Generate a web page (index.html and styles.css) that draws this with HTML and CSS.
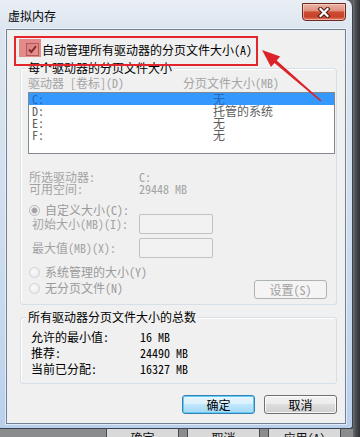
FILE: index.html
```html
<!DOCTYPE html>
<html lang="zh-CN">
<head>
<meta charset="utf-8">
<title>虚拟内存</title>
<link rel="stylesheet" href="styles.css">
</head>
<body>
<div class="screen">
  <div class="window">
    <div class="titlebar">
      <span class="title">虚拟内存</span>
      <div class="close">
        <svg width="14" height="11" viewBox="0 0 14 11"><path d="M3.5 2 L10.5 9 M10.5 2 L3.5 9" stroke="#4a1a14" stroke-width="4.2" stroke-linecap="square"/><path d="M3.5 2 L10.5 9 M10.5 2 L3.5 9" stroke="#fff" stroke-width="2.2" stroke-linecap="square"/></svg>
      </div>
    </div>
    <div class="client">
      <div class="auto-row">
        <span class="checkbox"><svg width="11" height="11" viewBox="0 0 11 11"><path d="M2 5.5 L4.3 8 L9 2.2" fill="none" stroke="#2a2a2a" stroke-width="1.9"/></svg></span>
        <span>自动管理所有驱动器的分页文件大小(A)</span>
      </div>

      <div class="group g1">
        <span class="group-title">每个驱动器的分页文件大小</span>
        <div class="list-head"><span>驱动器 [卷标](D)</span><span>分页文件大小(MB)</span></div>
        <div class="listbox">
          <div class="row sel"><span>C:</span><span>无</span></div>
          <div class="row"><span>D:</span><span>托管的系统</span></div>
          <div class="row"><span>E:</span><span>无</span></div>
          <div class="row"><span>F:</span><span>无</span></div>
        </div>
        <div class="info first"><span>所选驱动器:</span><span>C:</span></div>
        <div class="info"><span>可用空间:</span><span>29448 MB</span></div>
        <div class="radio-row r-custom"><span class="radio on"></span><span>自定义大小(C):</span></div>
        <div class="field f-init"><span class="field-label">初始大小(MB)(I):</span><span class="input"></span></div>
        <div class="field f-max"><span class="field-label">最大值(MB)(X):</span><span class="input"></span></div>
        <div class="lower">
          <div class="radios">
            <div class="radio-row"><span class="radio"></span><span>系统管理的大小(Y)</span></div>
            <div class="radio-row"><span class="radio"></span><span>无分页文件(N)</span></div>
          </div>
          <button class="btn btn-set" disabled>设置(S)</button>
        </div>
      </div>

      <div class="group g2">
        <span class="group-title">所有驱动器分页文件大小的总数</span>
        <div class="totals">
          <span>允许的最小值:</span><span>16 MB</span>
          <span>推荐:</span><span>24490 MB</span>
          <span>当前已分配:</span><span>16327 MB</span>
        </div>
      </div>

      <div class="actions">
        <button class="btn btn-default">确定</button>
        <button class="btn">取消</button>
      </div>
    </div>
  </div>

  <div class="behind-right"></div>
  <div class="behind-bottom">
    <span class="bg-btn b1">确定</span>
    <span class="bg-btn b2">取消</span>
    <span class="bg-btn b3">应用(A)</span>
  </div>

  <svg class="annotation" width="360" height="437" viewBox="0 0 360 437">
    <rect x="19" y="39" width="22" height="18" fill="rgba(214,38,38,0.5)"/>
    <rect x="15" y="37" width="242" height="28" fill="none" stroke="#e2262b" stroke-width="2"/>
    <polygon points="262,50 280.2,56.5 276.7,60.6 321.5,100.4 320.5,101.6 274.5,63 271,67.1" fill="#dc2329"/>
  </svg>
</div>
</body>
</html>
```

FILE: styles.css
```css
* { box-sizing: border-box; }
html, body { margin: 0; padding: 0; }
body {
  width: 360px;
  height: 437px;
  overflow: hidden;
  font-family: "Noto Sans Mono CJK SC", "Noto Sans CJK SC", sans-serif;
  font-size: 12px;
  line-height: 12px;
  color: #000;
}

.screen {
  position: relative;
  width: 360px;
  height: 437px;
  display: grid;
  grid-template-columns: 353px 7px;
  grid-template-rows: 429px 8px;
  background: #5b5f63;
}

/* window frame */
.window {
  grid-column: 1;
  grid-row: 1;
  display: flex;
  flex-direction: column;
  padding: 0 6px 4px 6px;
  border-right: 1px solid #3a4450;
  border-bottom: 1px solid #3a4450;
  border-top-right-radius: 7px;
  border-bottom-right-radius: 3px;
  background: linear-gradient(180deg, #e9eef4 0, #dde6f0 28px, #c9daee 70%, #b9d0ec 100%);
}

.titlebar {
  height: 29px;
  display: flex;
  justify-content: space-between;
  align-items: flex-start;
}
.title {
  margin-top: 10px;
  margin-left: 2px;
  color: #000;
}
.close {
  margin-top: 3px;
  width: 44px;
  height: 18px;
  border: 1px solid #6b2a20;
  border-radius: 0 0 4px 4px;
  background: linear-gradient(180deg, #eab3a6 0, #e09481 40%, #cc4a30 52%, #c8422a 80%, #e0806a 100%);
  box-shadow: inset 0 0 0 1px rgba(255, 220, 210, 0.55);
  display: flex;
  align-items: center;
  justify-content: center;
}

.client {
  flex: 1;
  display: flex;
  flex-direction: column;
  background: #f0f0f0;
  border: 1px solid #6f8095;
  box-shadow: 0 0 0 1px rgba(255, 255, 255, 0.55);
}

/* auto manage checkbox */
.auto-row {
  margin-top: 13px;
  margin-left: 19px;
  height: 13px;
  display: flex;
  align-items: center;
  gap: 3px;
}
.checkbox {
  width: 13px;
  height: 13px;
  border: 1px solid #8e8f8f;
  background: linear-gradient(135deg, #dcdcdc, #ffffff);
  display: flex;
  align-items: center;
  justify-content: center;
}

/* group boxes */
.group {
  margin: 12px 8px 0 13px;
  padding: 0 1px 5px 7px;
  border: 1px solid #d5dfe5;
  border-radius: 3px;
  box-shadow: inset 1px 1px 0 #fff;
  display: flex;
  flex-direction: column;
}
.group-title {
  align-self: flex-start;
  margin-top: -7px;
  margin-left: -2px;
  padding: 0 2px;
  background: #f0f0f0;
  height: 12px;
}
.g2 { padding-bottom: 6px; }

.list-head {
  margin-top: 3px;
  display: grid;
  grid-template-columns: 155px 1fr;
  color: #a3a3a3;
}

.listbox {
  margin-top: 3px;
  height: 62px;
  border: 1px solid #828790;
  background: #fff;
}
.row {
  height: 12px;
  display: grid;
  grid-template-columns: 181px 1fr;
  padding-left: 3px;
  color: #5e5e5e;
}
.row.sel {
  background: #3399ff;
  color: #2a68b8;
}

.info {
  margin-left: 1px;
  display: grid;
  grid-template-columns: 110px 1fr;
  color: #a3a3a3;
}
.info.first { margin-top: 17px; }

.radio-row {
  margin-left: 1px;
  height: 12px;
  display: flex;
  align-items: center;
  gap: 5px;
  color: #9a9a9a;
}
.r-custom { margin-top: 9px; }
.radio {
  width: 11px;
  height: 11px;
  border-radius: 50%;
  border: 1px solid #d2d2d2;
  background: radial-gradient(circle at 40% 40%, #fbfbfb, #e6e6e6);
  flex: none;
}
.radio.on {
  border-color: #b9b9b9;
  background: radial-gradient(circle, #9c9c9c 0, #a8a8a8 2.4px, #d0d0d0 3px, #f4f4f4 3.6px, #e4e4e4 100%);
}

.field {
  margin-left: 4px;
  height: 20px;
  display: flex;
  align-items: center;
  color: #a3a3a3;
}
.f-init { margin-top: -2px; }
.f-max { margin-top: 4px; }
.field-label { width: 107px; }
.input {
  width: 74px;
  height: 20px;
  border: 1px solid #c2c2c2;
  border-radius: 2px;
  background: #f2f2f2;
}

.lower {
  margin-top: 8px;
  display: flex;
  justify-content: space-between;
  align-items: flex-start;
}
.radios {
  display: flex;
  flex-direction: column;
  gap: 4px;
}

/* buttons */
.btn {
  font: inherit;
  line-height: 12px;
  padding: 0;
  width: 73px;
  height: 19px;
  color: #000;
  border: 1px solid #707070;
  border-radius: 3px;
  background: linear-gradient(180deg, #f2f2f2 0, #ebebeb 50%, #dddddd 50%, #cfcfcf 100%);
  box-shadow: inset 0 0 0 1px rgba(255, 255, 255, 0.8);
}
.btn-set {
  margin-top: 14px;
  margin-right: 8px;
  color: #a0a0a0;
  border-color: #adb2b5;
  background: #f4f4f4;
  box-shadow: none;
}
.btn-default {
  border-color: #3c7fb1;
  background: linear-gradient(180deg, #eaf6fd 0, #d9f0fc 50%, #bee6fd 50%, #a7d9f5 100%);
  box-shadow: inset 0 0 0 1px #5ccdf7;
}

.totals {
  margin-top: 6px;
  margin-left: 3px;
  display: grid;
  grid-template-columns: 109px 1fr;
  grid-auto-rows: 16px;
  align-items: center;
}

.actions {
  margin-top: 11px;
  padding-right: 8px;
  display: flex;
  justify-content: flex-end;
  gap: 9px;
}

/* what lies behind the dialog */
.behind-right {
  grid-column: 2;
  grid-row: 1 / span 2;
  background: linear-gradient(90deg, #6b6e72 0, #4a4d50 40%, #2f3133 100%);
}
.behind-bottom {
  grid-column: 1;
  grid-row: 2;
  overflow: hidden;
  background: #8a8c8e;
  display: flex;
  padding-left: 106px;
  gap: 8px;
}
.bg-btn {
  flex: none;
  width: 73px;
  height: 30px;
  margin-top: -10px;
  padding-top: 12px;
  text-align: center;
  border: 1px solid #4a4a4a;
  background: #d9d9d9;
  color: #111;
}

.annotation {
  position: absolute;
  left: 0;
  top: 0;
  pointer-events: none;
}
```
